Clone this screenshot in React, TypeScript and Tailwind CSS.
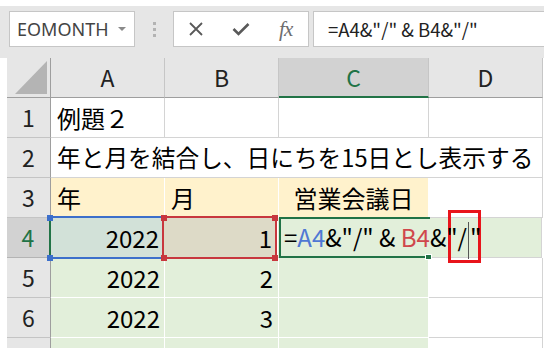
import React from "react";

const HDR = "bg-[#e6e6e6]";

function RowHead({ n, active }: { n: number | string; active?: boolean }) {
  return (
    <div
      className={
        "w-[44px] h-[40px] shrink-0 flex items-center justify-center text-[23px] leading-[39px] border-b " +
        (active
          ? "bg-[#d2d2d2] text-[#217346] border-r-2 border-r-[#217346] border-b-[#b4b4b4]"
          : "bg-[#e6e6e6] text-[#222] border-r border-r-[#9e9e9e] border-b-[#c4c4c4]")
      }
    >
      {n}
    </div>
  );
}

function Corners({ color, left = true, right = true }: { color: string; left?: boolean; right?: boolean }) {
  const sq = "absolute w-[6px] h-[6px] " + color;
  return (
    <>
      {left && <div className={sq + " left-[-3px] top-[-3px]"} />}
      {left && <div className={sq + " left-[-3px] bottom-[-4px]"} />}
      {right && <div className={sq + " right-[-3px] top-[-3px]"} />}
      {right && <div className={sq + " right-[-3px] bottom-[-4px]"} />}
    </>
  );
}

export default function App() {
  return (
    <div className="relative w-[554px] h-[348px] overflow-hidden bg-white text-black font-['Noto_Sans_CJK_JP','Noto_Sans',sans-serif]">
      {/* top strip */}
      <div className="h-[6px]" />
      {/* formula bar */}
      <div className={"h-[52px] w-[544px] flex items-start pt-[5px] " + HDR}>
        <div className="ml-[9px] w-[126px] h-[36px] bg-white border border-[#c6c6c6] flex items-center pl-[7px] pr-[8px]">
          <span className="flex-1 font-['Noto_Sans',sans-serif] text-[18px] leading-none text-[#444]">EOMONTH</span>
          <svg width="8" height="5" viewBox="0 0 8 5">
            <path d="M0 0 L8 0 L4 4 Z" fill="#8a8a8a" />
          </svg>
        </div>
        <div className="ml-[17px] w-[4px] h-[36px] flex flex-col items-center justify-center gap-[3px]">
          <div className="w-[3px] h-[3px] bg-[#b3b3b3]" />
          <div className="w-[3px] h-[3px] bg-[#b3b3b3]" />
          <div className="w-[3px] h-[3px] bg-[#b3b3b3]" />
        </div>
        <div className="ml-[17px] w-[136px] h-[36px] bg-white border border-[#c6c6c6] flex items-center">
          <div className="w-[45px] flex justify-center">
            <svg width="16" height="14" viewBox="0 0 16 14">
              <path d="M2 1 L14 13 M14 1 L2 13" stroke="#595959" strokeWidth="1.8" fill="none" />
            </svg>
          </div>
          <div className="w-[45px] flex justify-center">
            <svg width="18" height="14" viewBox="0 0 18 14">
              <path d="M1.5 7 L6.5 12 L16.5 2" stroke="#595959" strokeWidth="2.6" fill="none" />
            </svg>
          </div>
          <div className="w-[45px] flex justify-center">
            <span className="font-['Liberation_Serif',serif] italic text-[21px] leading-none text-[#6d6d6d] tracking-[-1px]">
              fx
            </span>
          </div>
        </div>
        <div className="ml-[4px] w-[231px] h-[36px] bg-white border border-[#c6c6c6] border-r-0 flex items-center pl-[14px]">
          <span className="text-[18.5px] leading-none text-[#222] whitespace-pre">=A4&amp;"/" &amp; B4&amp;"/"</span>
        </div>
      </div>

      {/* grid */}
      <div className="flex flex-col pl-[7px]">
        {/* column headers */}
        <div className="flex h-[40px]">
          <div className="relative w-[44px] h-[40px] bg-[#e6e6e6] border-r border-b border-[#9e9e9e]">
            <svg className="absolute left-0 top-0" width="44" height="40" viewBox="0 0 44 40">
              <path d="M40 3 L40 36 L8 36 Z" fill="#b4b4b4" />
            </svg>
          </div>
          <div className="w-[114px] h-[40px] bg-[#e6e6e6] border-r border-r-[#c6c6c6] border-b border-b-[#9e9e9e] flex items-center justify-center text-[23px] leading-[39px] text-[#222]">
            A
          </div>
          <div className="w-[114px] h-[40px] bg-[#e6e6e6] border-r border-r-[#c6c6c6] border-b border-b-[#9e9e9e] flex items-center justify-center text-[23px] leading-[39px] text-[#222]">
            B
          </div>
          <div className="w-[150px] h-[40px] bg-[#d2d2d2] border-r border-r-[#c6c6c6] border-b-2 border-b-[#217346] flex items-center justify-center text-[23px] leading-[38px] text-[#217346]">
            C
          </div>
          <div className="w-[114px] h-[40px] bg-[#e6e6e6] border-r border-r-[#c6c6c6] border-b border-b-[#9e9e9e] flex items-center justify-center text-[23px] leading-[39px] text-[#222]">
            D
          </div>
        </div>

        {/* row 1 */}
        <div className="flex h-[40px]">
          <RowHead n={1} />
          <div className="w-[114px] h-[40px] border-r border-b border-[#d4d4d4] flex items-center pl-[6px] text-[24px] leading-[39px] whitespace-nowrap">
            例題２
          </div>
          <div className="w-[114px] h-[40px] border-r border-b border-[#d4d4d4]" />
          <div className="w-[150px] h-[40px] border-r border-b border-[#d4d4d4]" />
          <div className="w-[114px] h-[40px] border-r border-b border-[#d4d4d4]" />
        </div>

        {/* row 2 */}
        <div className="flex h-[40px]">
          <RowHead n={2} />
          <div className="w-[492px] h-[40px] border-r border-b border-[#d4d4d4] flex items-center pl-[6px] text-[23.7px] leading-[39px] whitespace-nowrap">
            年と月を結合し、日にちを15日とし表示する
          </div>
        </div>

        {/* row 3 */}
        <div className="flex h-[40px]">
          <RowHead n={3} />
          <div className="w-[114px] h-[40px] bg-[#fff2cc] border-r border-b border-white flex items-center pl-[6px] text-[24px] leading-[39px]">
            年
          </div>
          <div className="w-[114px] h-[40px] bg-[#fff2cc] border-r border-b border-white flex items-center pl-[6px] text-[24px] leading-[39px]">
            月
          </div>
          <div className="w-[150px] h-[40px] bg-[#fff2cc] border-r border-r-white border-b border-b-[#d4d4d4] flex items-center justify-center text-[24px] leading-[39px]">
            営業会議日
          </div>
          <div className="w-[114px] h-[40px] border-r border-b border-[#d4d4d4]" />
        </div>

        {/* row 4 */}
        <div className="flex h-[40px]">
          <RowHead n={4} active />
          <div className="relative w-[113px] h-[40px] bg-[#d2e1d8] border-r border-b border-white flex items-center justify-end pr-[4px] text-[24px] leading-[39px]">
            2022
            <div className="absolute left-[-1px] right-0 top-[-2px] bottom-[-2px] border-t-2 border-b-2 border-[#3c6fcb]">
              <Corners color="bg-[#3c6fcb]" right={false} />
            </div>
          </div>
          <div className="relative w-[114px] h-[40px] bg-[#dddac7] border-r border-b border-white flex items-center justify-end pr-[5px] text-[24px] leading-[39px]">
            1
            <div className="absolute left-[-2px] right-0 top-[-2px] bottom-[-2px] border-2 border-[#c8373e]">
              <Corners color="bg-[#c8373e]" />
            </div>
          </div>
          <div className="relative w-[150px] h-[40px] bg-[#e2efda] border-b border-[#d4d4d4] flex items-center pl-[6px] text-[24px] leading-[39px] whitespace-pre">
            <span className="relative z-10">
              =<span className="text-[#4f78d4]">A4</span>&amp;"/" &amp; <span className="text-[#d0474c]">B4</span>&amp;"/
              <span className="inline-block w-[1px] h-[37px] bg-[#555] align-middle mx-[1px]" />"
            </span>
            <div className="absolute left-[1px] right-[-2px] top-[-1px] bottom-[-1px] border-l-2 border-t-2 border-b-2 border-[#217346]" />
            <div className="absolute right-[-4px] bottom-[-3px] w-[7px] h-[6px] bg-[#217346] border border-white" />
          </div>
          <div className="w-[114px] h-[40px] bg-[#e2efda] border-r border-b border-[#d4d4d4]" />
        </div>

        {/* rows 5, 6, 7 */}
        {[5, 6, 7].map((n) => (
          <div key={n} className="flex h-[40px]">
            <RowHead n={n === 7 ? "" : n} />
            <div className="w-[114px] h-[40px] bg-[#e2efda] border-r border-b border-white flex items-center justify-end pr-[4px] text-[24px] leading-[39px]">
              {n === 7 ? "" : "2022"}
            </div>
            <div className="w-[114px] h-[40px] bg-[#e2efda] border-r border-b border-white flex items-center justify-end pr-[5px] text-[24px] leading-[39px]">
              {n === 7 ? "" : String(n - 3)}
            </div>
            <div className="w-[150px] h-[40px] bg-[#e2efda] border-r border-b border-white" />
            <div className="w-[114px] h-[40px] border-r border-b border-[#d4d4d4]" />
          </div>
        ))}
      </div>

      {/* annotation box */}
      <div className="absolute left-[448px] top-[210px] w-[33px] h-[53px] border-[3px] border-[#e8141b]" />
    </div>
  );
}
